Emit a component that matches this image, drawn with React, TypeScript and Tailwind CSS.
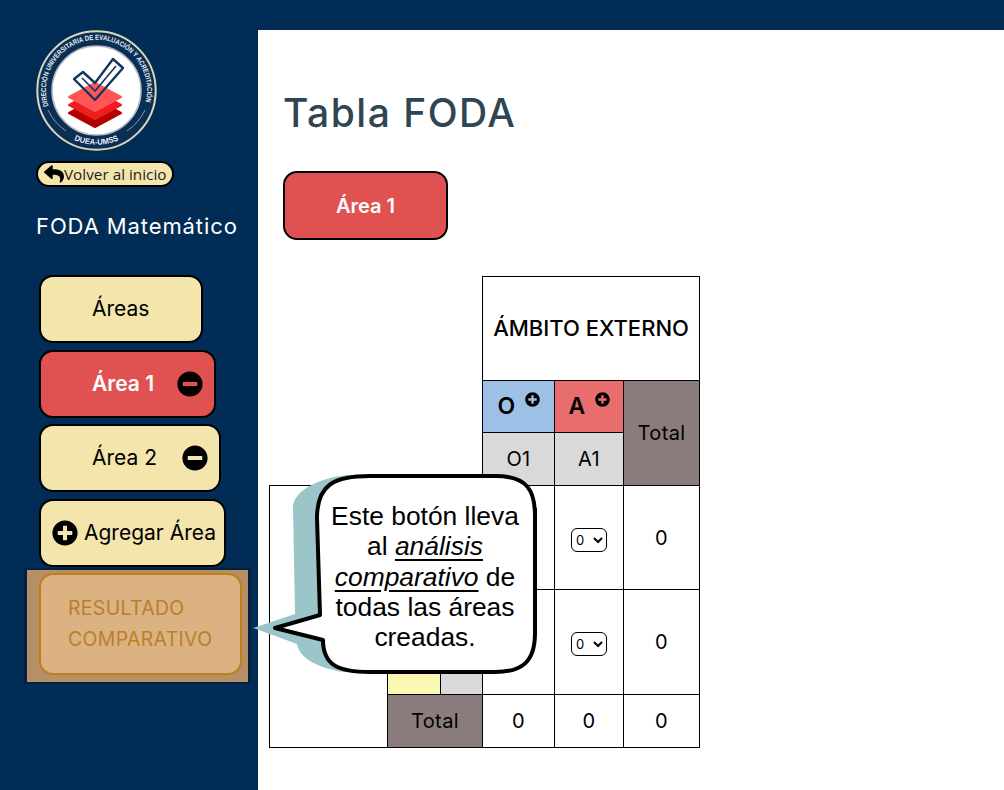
import { FaMinusCircle, FaPlusCircle, FaReply } from "react-icons/fa";

function Logo() {
  return (
    <svg viewBox="0 0 121 121" className="h-[121px] w-[121px]">
      <defs>
        <path id="arcTop" d="M 12.5 76 A 50.5 50.5 0 1 1 108.5 76" fill="none" />
        <path id="arcBottom" d="M 38 110 A 56 56 0 0 0 83 110" fill="none" />
      </defs>
      <circle cx="60.5" cy="60.5" r="59.2" fill="#0a2f57" stroke="#ddd7ba" strokeWidth="2" />
      <circle cx="60.5" cy="60.5" r="44.5" fill="#fff" stroke="#b9bcc0" strokeWidth="1.5" />
      <text fill="#e8ecef" fontSize="7.2" fontWeight="700" fontFamily="'Liberation Sans', sans-serif">
        <textPath href="#arcTop" textLength="186" lengthAdjust="spacingAndGlyphs">
          DIRECCIÓN UNIVERSITARIA DE EVALUACIÓN Y ACREDITACIÓN
        </textPath>
      </text>
      <text fill="#e8ecef" fontSize="8" fontWeight="700" fontFamily="'Liberation Sans', sans-serif">
        <textPath href="#arcBottom" textLength="46" lengthAdjust="spacingAndGlyphs">
          DUEA-UMSS
        </textPath>
      </text>
      <path d="M12 80 A 52 52 0 0 0 30 101" fill="none" stroke="#b8b28e" strokeWidth="0.8" />
      <path d="M109 80 A 52 52 0 0 1 91 101" fill="none" stroke="#b8b28e" strokeWidth="0.8" />
      <path d="M33 83 L59 69 L85 83 L59 97 Z" fill="#b30000" stroke="#b30000" strokeWidth="2" strokeLinejoin="round" />
      <path d="M33 75 L59 61 L85 75 L59 89 Z" fill="#f01d1d" stroke="#f01d1d" strokeWidth="2" strokeLinejoin="round" />
      <path d="M33 67 L59 53 L85 67 L59 81 Z" fill="#ff5555" stroke="#ff5555" strokeWidth="2" strokeLinejoin="round" />
      <path d="M38 49 L47 42 L59 53 L77 29 L87 38 L59 70 Z" fill="none" stroke="#12365f" strokeWidth="2.4" strokeLinejoin="round" />
      <path d="M46 48 L59 61 L80 36" fill="none" stroke="#12365f" strokeWidth="1.6" />
    </svg>
  );
}

function SideButton({ label, width, active, minus }: { label: string; width: string; active?: boolean; minus?: boolean }) {
  return (
    <button
      className={`${width} flex h-[68px] items-center rounded-[14px] border-2 border-black pl-[51px] text-[21px] ${
        active ? "bg-[#e05252] font-semibold text-white" : "bg-[#f4e5ad] text-black"
      }`}
    >
      <span>{label}</span>
      {minus && <FaMinusCircle className="ml-auto mr-[11px] shrink-0 text-[26px] text-black" />}
    </button>
  );
}

function Sidebar() {
  return (
    <aside className="flex w-[258px] shrink-0 flex-col pl-[36px] pt-[30px]">
      <Logo />
      <button className="mt-[10px] flex h-[26px] w-[138px] items-center rounded-full border-2 border-black bg-[#f4e5ad] pl-[6px] font-['Open_Sans',sans-serif] text-[15.3px] text-[#222]">
        <FaReply className="shrink-0 text-[20px] text-black" />
        Volver al inicio
      </button>
      <h2 className="mt-[24px] text-[22px] leading-[30px] tracking-[0.9px] text-white">FODA Matemático</h2>
      <nav className="ml-[3px] mt-[34px] flex flex-col gap-[6.5px]">
        <SideButton label="Áreas" width="w-[164px]" />
        <SideButton label="Área 1" width="w-[177px]" active minus />
        <SideButton label="Área 2" width="w-[182px]" minus />
        <button className="flex h-[68px] w-[187px] items-center gap-[6px] rounded-[14px] border-2 border-black bg-[#f4e5ad] pl-[11px] text-[21px] text-black">
          <FaPlusCircle className="shrink-0 text-[26px]" />
          <span className="whitespace-nowrap">Agregar Área</span>
        </button>
      </nav>
      {/* highlighted button */}
      <div className="-ml-[12px] mt-[1px] w-[227px] border-y-2 border-x-[3px] border-[#03203c] bg-[#b58f66] pb-[7px] pl-[12px] pt-[3px]">
        <button className="h-[102px] w-[203px] rounded-[14px] border-2 border-[#c07f1a] bg-[#dcb282] pl-[27px] text-left text-[19.5px] leading-[31px] tracking-[0.3px] text-[#b97f2a]">
          RESULTADO
          <br />
          COMPARATIVO
        </button>
      </div>
    </aside>
  );
}

const cell = "border border-black text-center text-[20px] tracking-[0.4px] text-black";

function Pick() {
  return (
    <select className="h-[24px] w-[36px] rounded-[6px] border border-black bg-white text-[13px]">
      <option>0</option>
    </select>
  );
}

function FodaHead({ letter, color }: { letter: string; color: string }) {
  return (
    <td className={`${cell} ${color}`}>
      <span className="inline-flex items-start gap-[9px] text-[23px] font-semibold">
        {letter} <FaPlusCircle className="mt-[3px] text-[15px]" />
      </span>
    </td>
  );
}

function FodaTable() {
  return (
    <table className="ml-[11px] mt-[36px] w-[430px] table-fixed border-collapse">
      <colgroup>
        <col className="w-[118px]" />
        <col className="w-[53px]" />
        <col className="w-[42px]" />
        <col className="w-[72px]" />
        <col className="w-[69px]" />
        <col className="w-[76px]" />
      </colgroup>
      <tbody>
        <tr className="h-[104px]">
          <td colSpan={3} rowSpan={3} />
          <td colSpan={3} className={`${cell} text-[22px] font-medium tracking-normal`}>
            ÁMBITO EXTERNO
          </td>
        </tr>
        <tr className="h-[52px]">
          <FodaHead letter="O" color="bg-[#9dc0e6]" />
          <FodaHead letter="A" color="bg-[#e86e6e]" />
          <td rowSpan={2} className={`${cell} bg-[#8a7c7c]`}>
            Total
          </td>
        </tr>
        <tr className="h-[53px]">
          <td className={`${cell} bg-[#d9d9d9]`}>O1</td>
          <td className={`${cell} bg-[#d9d9d9]`}>A1</td>
        </tr>
        <tr className="h-[104px]">
          <td rowSpan={3} className={cell} />
          <td className={cell} />
          <td className={cell} />
          <td className={cell} />
          <td className={cell}>
            <Pick />
          </td>
          <td className={cell}>0</td>
        </tr>
        <tr className="h-[105px]">
          <td className={`${cell} bg-[#fbf8b4]`} />
          <td className={`${cell} bg-[#d9d9d9]`} />
          <td className={cell} />
          <td className={cell}>
            <Pick />
          </td>
          <td className={cell}>0</td>
        </tr>
        <tr className="h-[53px]">
          <td colSpan={2} className={`${cell} bg-[#8a7c7c]`}>
            Total
          </td>
          <td className={cell}>0</td>
          <td className={cell}>0</td>
          <td className={cell}>0</td>
        </tr>
      </tbody>
    </table>
  );
}

// callout that points at the highlighted button
function Callout() {
  return (
    <div className="absolute left-[250px] top-[468px] h-[215px] w-[295px]">
      <svg viewBox="0 0 295 215" className="absolute inset-0 h-full w-full">
        <path d="M43 40 C43 22 70 10 97 7 L120 7 L120 204 L93 204 C70 200 50 192 47 176 L3 160 L45 146 Z" fill="#9cc5c9" />
        <path
          d="M67 50 C67 16 85 8 120 8 L245 8 C277 8 285 22 285 48 L285 165 C285 194 272 204 245 204 L120 204 C88 204 73 197 73 172 L25 160 L70 147 Z"
          fill="#fff"
          stroke="#000"
          strokeWidth="4"
          strokeLinejoin="round"
        />
        <path d="M283 40 L287 40 L287 162 L283 175 Z" fill="#000" />
      </svg>
      <p className="absolute left-[75px] top-[33px] w-[200px] text-center font-['Liberation_Sans',sans-serif] text-[26.4px] leading-[30.3px] text-black">
        Este botón lleva
        <br />
        al <em className="underline underline-offset-4">análisis</em>
        <br />
        <em className="underline underline-offset-4">comparativo</em> de
        <br />
        todas las áreas
        <br />
        creadas.
      </p>
    </div>
  );
}

export default function App() {
  return (
    <div className="relative flex h-[790px] overflow-hidden bg-[#012c56] font-['Inter',sans-serif]">
      <Sidebar />
      <main className="mt-[30px] flex-1 bg-white pl-[25px]">
        <h1 className="mt-[56px] text-[39px] font-medium leading-[54px] tracking-[1.5px] text-[#2e4553]">Tabla FODA</h1>
        <button className="mt-[31px] block h-[69px] w-[165px] rounded-[14px] border-2 border-black bg-[#e05252] text-[20px] font-semibold text-white">
          Área 1
        </button>
        <div className="-ml-[25px]">
          <FodaTable />
        </div>
      </main>
      <Callout />
    </div>
  );
}
